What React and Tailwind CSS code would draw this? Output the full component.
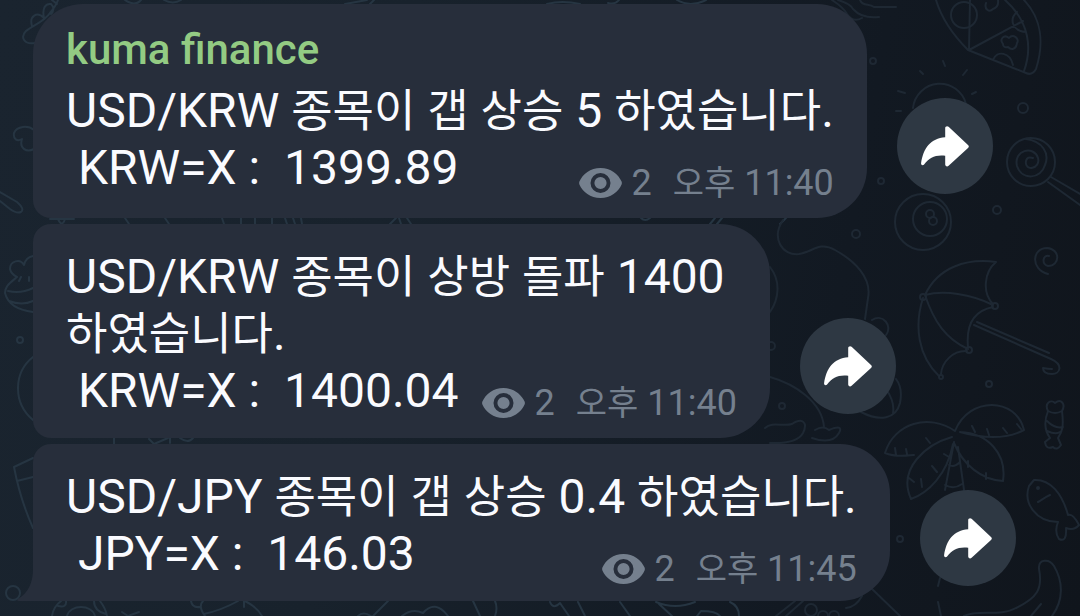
const HANGUL = /([\u3131-\uD79D]+)/;

function Mixed({ text, small }) {
  return text.split(HANGUL).map((part, i) =>
    HANGUL.test(part) ? (
      <span key={i} className={small ? "text-[34px] leading-none" : "text-[45px] leading-none"}>{part}</span>
    ) : (
      part
    )
  );
}

function Eye() {
  return (
    <svg viewBox="0 0 43 30" className="h-[30px] w-[43px] shrink-0" aria-hidden="true">
      <path fill="currentColor" fillRule="evenodd" d="M21.500 0C11.500 0 3.600 6.200 0.400 13.600C0 14.500 0 15.500 0.400 16.400C3.600 23.800 11.500 30 21.500 30S39.400 23.800 42.600 16.400C43 15.500 43 14.500 42.600 13.600C39.400 6.200 31.500 0 21.500 0ZM21.500 5A10 10 0 1 1 21.500 25A10 10 0 1 1 21.500 5ZM21.500 8.900A6.100 6.100 0 1 0 21.500 21.100A6.100 6.100 0 1 0 21.500 8.900Z" />
    </svg>
  );
}

function ForwardButton({ className }) {
  return (
    <button type="button" aria-label="전달" className={`flex size-24 shrink-0 items-center justify-center rounded-full bg-[#2e3843] text-white ${className}`}>
      <svg viewBox="0 0 48 41" className="h-[41px] w-12" aria-hidden="true">
        <path fill="currentColor" d="M24.200 2C24.200 0.400 26.200 -0.500 27.600 0.800L47 18.900C48.100 19.900 48.100 21.100 47 22.100L27.600 39.800C26.200 41.100 24.200 40.300 24.200 38.600V29.700C14.500 28.500 8.300 31.500 3.300 38.300C2 40 -0.200 39.200 0.100 37.100C2.200 22.500 9.500 12.200 24.200 11.200Z" />
      </svg>
    </button>
  );
}

function Message({ name, lines, time, last }) {
  const body = lines.slice(0, -1);
  const tail = lines[lines.length - 1];
  return (
    <article className="flex items-end gap-[30px]">
      <div
        className={`relative w-fit rounded-r-[50px] bg-[#272e3b] px-[33px] ${last ? "pb-3" : "pb-[15px]"} ${
          name ? "rounded-tl-[50px] rounded-bl-[18px] pt-[19px]" : last ? "rounded-tl-[18px] pt-6" : "rounded-l-[18px] pt-6"
        }`}
      >
        {name && <h2 className="mb-[5px] text-[42px] leading-[54px] font-medium text-[#93cb83]">{name}</h2>}
        {body.map((line) => (
          <p key={line} className="whitespace-pre"><Mixed text={line} /></p>
        ))}
        <div className="flex items-end justify-between gap-6">
          <p className={`whitespace-pre ${name || last ? "pb-[7px]" : "pb-1"}`}><Mixed text={tail} /></p>
          <div className="flex items-center text-[36px] leading-10 text-[#75808e]">
            <Eye />
            <span className="ml-[9px]">2</span>
            <time className="ml-[21px] whitespace-pre"><Mixed small text={time} /></time>
          </div>
        </div>
        {last && (
          <svg viewBox="0 0 17 32" className="absolute bottom-0 -left-4 h-8 w-[17px] text-[#272e3b]" aria-hidden="true">
            <path fill="currentColor" d="M17 0H16C16 14 11 24 1 30Q-1 32 2 32H17Z" />
          </svg>
        )}
      </div>
      <ForwardButton className={last ? "mb-[15px]" : "mb-6"} />
    </article>
  );
}

function Doodles() {
  return (
    <svg viewBox="0 0 1080 616" preserveAspectRatio="xMinYMin slice" className="absolute inset-0 size-full" fill="none" strokeWidth="2" strokeLinecap="round" strokeLinejoin="round" aria-hidden="true">
      <g stroke="#263542">
        <path d="M35 43C24 45 20 37 26 31C33 25 44 22 50 13C55 7 57 3 58 0M32 26C29 16 37 11 44 18C42 9 45 3 51 4C55 8 53 12 51 14M52 0L57 4M34 130C28 125 17 126 14 133C13 139 17 142 22 139C19 148 26 153 34 149M0 192L17 202Q25 209 21 212Q17 214 10 209L0 201" />
        <path d="M33 256C28 257 25 260 24 265C20 258 10 261 10 269Q11 274 17 277C10 283 5 286 5 293Q9 309 33 312M8 291Q21 294 33 288M9 301Q22 306 33 301M19 281L21 277M29 281V277M33 357C14 372 12 402 33 420M33 458L14 467C18 488 24 508 33 528M17 481L33 477" />
        <circle cx="20" cy="340" r="3" /><circle cx="13" cy="593" r="7" />
        <path d="M50 219H74M58 219Q62 228 65 219M125 218L129 224M165 218L169 224M222 218L224 224M241 218V224M255 218V224M272 218V224M285 218L287 224M293 218L295 224M301 218L302 224M390 224L396 218M399 218L401 224M407 218L411 224M114 438V444M149 439L154 444L168 438M170 438V443M180 438Q188 444 193 438" />
        <path d="M52 616C53 609 57 604 61 601M58 606Q67 608 66 601M67 616C70 604 92 604 95 616M94 601Q94 611 106 614M100 601Q106 609 107 616M122 612L128 616L139 612M191 601Q192 608 200 607M203 601C198 606 202 612 205 616M204 614Q222 610 238 601M245 601Q257 607 262 616M244 601V607M358 616Q363 611 371 616M373 616L388 601M402 616Q412 608 423 613Q435 599 448 616M473 601L480 616M495 601Q498 608 495 616" />
        <path d="M125 0Q135 7 141 0M164 0Q173 5 181 0M345 4L367 0M370 4L374 0M547 4Q562 0 580 4M608 3Q615 5 619 0M677 0Q690 8 706 0M641 218Q645 222 650 218M710 224L715 218M717 224L722 218M780 224L786 218" />
        <path d="M550 602Q553 610 560 603L569 616M578 602L585 616M620 602L630 616M656 602Q675 610 695 602M659 604L672 616M697 616L701 611Q716 611 720 616M730 602Q739 606 739 616" />
      </g>
      <g stroke="#1e2833">
        <path d="M832 0Q844 8 847 14Q853 23 862 18M838 0Q851 4 853 9Q862 19 879 17M860 0C863 7 869 3 874 7H896M936 0C942 20 956 38 968 50L1026 73Q1032 76 1036 69C1044 44 1042 19 1024 0M1005 0C1030 22 1032 49 1024 71M970 0L969 50L1023 21M993 60C997 50 1010 52 1013 65M1017 12C1009 19 1012 31 1026 32M986 3C984 9 989 13 993 9Q999 7 998 0M1003 44C999 39 1004 34 1009 38C1013 33 1020 39 1017 43C1016 50 1011 50 1008 47Q1003 48 1003 44" />
        <circle cx="964" cy="15" r="13" /><circle cx="873" cy="61" r="3" /><circle cx="881" cy="181" r="3" /><circle cx="1023" cy="108" r="5" /><circle cx="997" cy="210" r="4" />
        <path d="M913 108A27 27 0 0 1 966 104M943 61L945 66M920 71L923 74M967 70L963 75M898 91L905 93M972 94L976 92M896 111H901" />
        <circle cx="1031" cy="162" r="24" /><path d="M1026 139C1042 141 1050 153 1045 165C1041 179 1022 181 1017 166C1013 150 1034 145 1038 158C1041 169 1024 172 1026 161Q1027 156 1033 158M1051 177L1080 194M1048 182L1080 205" />
        <circle cx="923" cy="222" r="28" /><circle cx="930" cy="219" r="17" /><circle cx="930" cy="214" r="4" /><circle cx="933" cy="221" r="4" />
        <path d="M783 220C771 238 782 256 799 254C813 252 819 241 835 250C855 261 872 278 868 298L865 319M872 320C883 313 893 326 886 335M770 267C781 281 779 299 770 312M770 377C795 384 822 402 824 427M861 412C880 422 896 419 900 403Q903 388 896 379M886 389Q895 402 893 413" />
        <circle cx="856" cy="234" r="4" /><circle cx="771" cy="346" r="4" /><circle cx="782" cy="406" r="3" /><circle cx="989" cy="384" r="3" /><circle cx="900" cy="539" r="3" />
        <path d="M925 295C938 267 967 258 996 262C984 272 982 293 993 304M925 295C944 290 971 294 993 305M925 295C934 322 946 339 968 349M923 298C914 326 918 356 939 376M993 307C973 311 966 326 968 347M967 351C953 350 942 362 941 374M974 325L1051 359C1064 365 1060 374 1052 374Q1043 374 1043 368Q1048 369 1052 369M977 322L1049 353" />
        <circle cx="923" cy="297" r="3" /><circle cx="995" cy="306" r="3" /><circle cx="969" cy="350" r="3" /><circle cx="941" cy="377" r="2" />
        <path d="M1048 274C1030 269 1032 248 1047 248C1061 249 1060 266 1048 266C1041 264 1043 254 1049 256M1048 411C1044 403 1051 399 1055 403C1061 398 1066 404 1062 411C1064 427 1062 432 1058 438L1061 445Q1057 451 1053 447Q1046 450 1045 442L1050 438C1045 431 1044 421 1048 411M1048 411Q1055 415 1062 411M1047 421Q1055 429 1063 427M1047 431Q1056 435 1060 432" />
        <path d="M765 428C772 421 783 427 792 424C803 417 808 423 803 433Q797 444 770 443M815 430Q823 425 829 430Q844 424 839 433Q832 445 812 438" />
        <path d="M955 431C929 413 894 423 885 453C897 458 910 455 914 455M955 431C969 396 1016 397 1024 430C1005 440 981 438 960 432M952 437C927 444 897 468 911 499C928 493 947 475 953 444M954 443C963 465 982 480 1003 481C1007 454 988 433 960 432M954 442L945 490M958 447L964 490M945 485Q954 490 962 484M949 465Q954 468 960 462M895 448L896 455M906 449L907 454M926 438L930 443M944 454L949 457M932 466L937 472M921 479L922 487M909 478L914 482M968 461V467M986 473V479M972 426L975 432M987 429L989 435M1003 428L1007 433M1017 424L1021 429" />
        <path d="M1034 480C1050 479 1062 493 1068 515Q1073 513 1079 525Q1074 531 1066 528Q1067 543 1059 539Q1054 532 1058 522C1036 522 1023 503 1029 486ZM1038 502C1042 500 1045 497 1050 495" /><circle cx="1038" cy="488" r="1" />
        <path d="M964 616C977 609 1000 617 1016 608C1037 598 1043 589 1039 569C1038 559 1049 558 1054 566C1063 581 1064 600 1052 616M1041 604L1031 616M940 578L938 586M938 602L941 616M870 587L900 616M862 596Q856 607 846 608M776 616L795 601M786 616L803 601" /><circle cx="811" cy="610" r="6" /><circle cx="823" cy="616" r="5" /><circle cx="834" cy="616" r="5" />
      </g>
    </svg>
  );
}

const messages = [
  { name: "kuma finance", lines: ["USD/KRW 종목이 갭 상승 5 하였습니다.", " KRW=X :  1399.89"], time: "오후 11:40" },
  { lines: ["USD/KRW 종목이 상방 돌파 1400", "하였습니다.", " KRW=X :  1400.04"], time: "오후 11:40" },
  { lines: ["USD/JPY 종목이 갭 상승 0.4 하였습니다.", " JPY=X :  146.03"], time: "오후 11:45", last: true },
];

export default function App() {
  return (
    <div className="relative min-h-screen overflow-hidden bg-[linear-gradient(100deg,#1a242f_0%,#18222c_35%,#121922_75%,#10151c_100%)] font-['Roboto','Noto_Sans_CJK_KR',sans-serif] text-[48px] leading-[57px] text-[#fafbff]">
      <Doodles />
      <main className="relative flex flex-col gap-[6px] pt-1 pl-[33px]">
        {messages.map((message) => (
          <Message key={message.lines[0]} {...message} />
        ))}
      </main>
    </div>
  );
}
